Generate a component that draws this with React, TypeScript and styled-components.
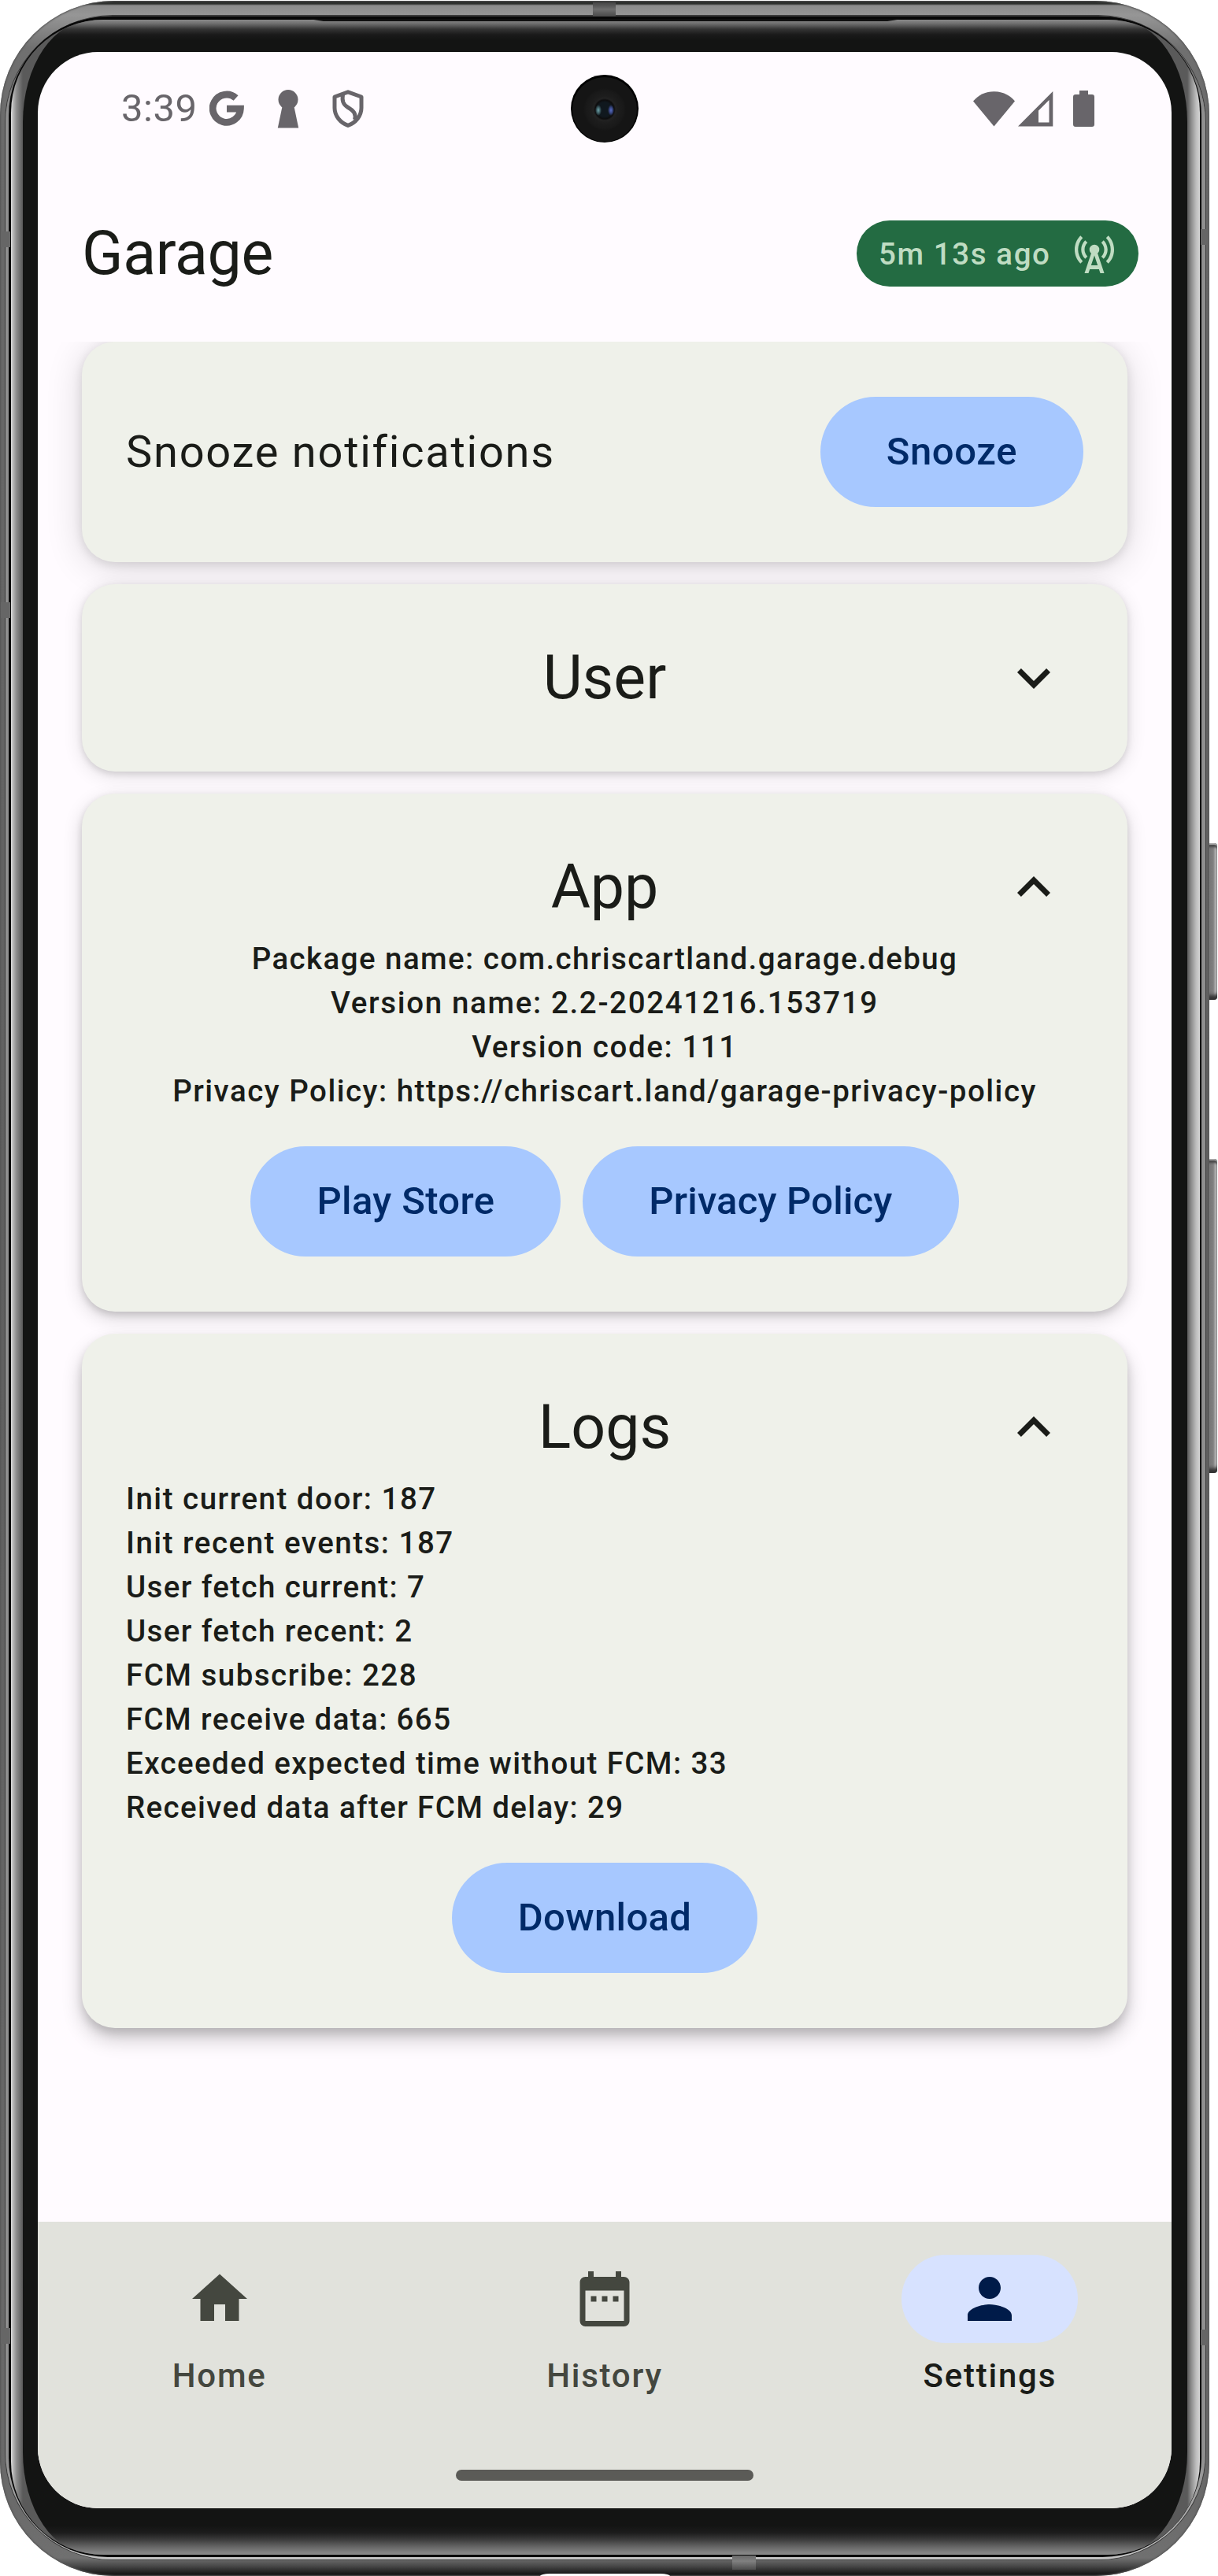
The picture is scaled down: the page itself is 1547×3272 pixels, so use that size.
import React from "react";
import styled, { createGlobalStyle } from "styled-components";
import {
  MdCellTower,
  MdDateRange,
  MdExpandLess,
  MdExpandMore,
  MdHome,
  MdPerson,
} from "react-icons/md";

const GlobalStyle = createGlobalStyle`
  *, *::before, *::after { box-sizing: border-box; }
  body { margin: 0; background: #fff; font-family: Roboto, "Noto Sans", sans-serif; }
  h1, h2, p { margin: 0; }
  h1, h2 { font-weight: 400; }
  button { font: inherit; border: 0; padding: 0; cursor: pointer; }
  svg { display: block; flex: none; }
`;

/* ---------- device ---------- */

const Device = styled.div`
  position: relative;
  width: 1547px;
  height: 3272px;
  overflow: hidden;
`;

const Metal = styled.div`
  position: relative;
  width: 1536px;
  height: 3271px;
  margin-top: 1px;
  padding: 19px 5px 21px 7px;
  border-radius: 145px;
  background: linear-gradient(
    to bottom,
    #262826 0,
    #303230 4px,
    #8c8c8c 6px,
    #969696 18px,
    #707070 60px,
    #6a6a6a 200px,
    #5f5f5f 1600px,
    #6a6a6a 3180px,
    #707070 3248px,
    #4a4a4a 3258px,
    #141414 3269px
  );
  box-shadow: inset 0 0 2px 1px #555;
`;

const Rim = styled.div`
  height: 100%;
  padding: 1px 5px 3px 4px;
  border-radius: 136px;
  background: linear-gradient(to bottom, #3c3c3c 0, #555 20px, #8f8f8f 120px, #8f8f8f 3100px, #c2c2c2 3229px);
  box-shadow: 0 0 0 1px #3a3a3a;
`;

const Gasket = styled.div`
  height: 100%;
  padding: 4px 2px 3px 3px;
  border-radius: 126px;
  background: #080808;
`;

const GlassEdge = styled.div`
  height: 100%;
  padding: 0 16px 0 15px;
  border-radius: 118px;
  overflow: hidden;
  background: linear-gradient(
    to right,
    #e0e0e0 0,
    #b4b4b4 3px,
    #8c8c8c 7px,
    #5a5a5a 15px,
    #5a5a5a 1494px,
    #8c8c8c 1499px,
    #bcbcbc 1505px,
    #d4d4d4 1510px
  );
`;

const Bezel = styled.div`
  height: 100%;
  padding: 41px 20px 57px 19px;
  border-radius: 88px / 130px;
  background: linear-gradient(
    to bottom,
    #8a8a8a 0,
    #6e6e6e 5px,
    #343434 12px,
    #1a1a1a 19px,
    #131413 26px,
    #131413 3183px,
    #1c1c1c 3192px,
    #383838 3200px,
    #666 3210px,
    #868686 3218px
  );
`;

const Screen = styled.div`
  display: flex;
  flex-direction: column;
  height: 3120px;
  border-radius: 77px;
  overflow: hidden;
  background: #fffbff;
  color: #1a1c18;
`;

const SideKey = styled.div<{ $top: number; $height: number }>`
  position: absolute;
  left: 1533px;
  top: ${(p) => p.$top}px;
  width: 13px;
  height: ${(p) => p.$height}px;
  border-radius: 3px 4px 4px 3px;
  background: linear-gradient(to right, #666 0, #999 2px, #777 4px, #808080 8px, #b5b5b5 11px, #888 13px);
  box-shadow: inset 0 -9px 4px -3px #333, inset 0 2px 1px #aaa, inset 0 9px 3px -4px #444;
`;

const AntennaBand = styled.div<{ $x: number; $y: number; $w: number; $h: number; $tone: string }>`
  position: absolute;
  left: ${(p) => p.$x}px;
  top: ${(p) => p.$y}px;
  width: ${(p) => p.$w}px;
  height: ${(p) => p.$h}px;
  background: ${(p) => p.$tone};
`;

const PortCutout = styled.div`
  position: absolute;
  left: 686px;
  top: 3269px;
  width: 165px;
  height: 6px;
  border-radius: 12px 12px 0 0 / 3px 3px 0 0;
  background: #fff;
`;

const TopLip = styled.div`
  position: absolute;
  left: 392px;
  top: 24px;
  width: 754px;
  height: 3px;
  background: #101010;
  clip-path: polygon(0 0, 100% 0, 97.5% 100%, 2.5% 100%);
`;

const Camera = styled.div`
  position: absolute;
  left: 725px;
  top: 95px;
  width: 86px;
  height: 86px;
  border-radius: 50%;
  background:
    radial-gradient(ellipse 4px 7px at 35px 45px, #6fa5ab 0, #3b5a60 55%, transparent 100%),
    radial-gradient(ellipse 4px 7px at 51px 45px, #5a6fc4 0, #35427c 55%, transparent 100%),
    radial-gradient(circle at 43px 44px, #10181e 0 9px, #0d0d0e 12px, #222 14px, #1d1d1d 17px, #191919 24px, #151515 27px);
  box-shadow: inset 0 1px 0 2px #000;
`;

/* ---------- status bar ---------- */

const StatusBar = styled.div`
  display: flex;
  align-items: center;
  flex: none;
  height: 144px;
  padding: 0 98px 0 106px;
  color: #68656a;
`;

const Clock = styled.span`
  width: 112px;
  font-size: 49px;
  line-height: 56px;
  letter-spacing: 0.5px;
`;

const Notifications = styled.div`
  display: flex;
  align-items: center;
  gap: 42px;
`;

const Indicators = styled.div`
  display: flex;
  align-items: center;
  margin-left: auto;
`;

const SignalSlot = styled.span`
  margin: 1px 25px 0 4px;
`;

const GoogleIcon = () => (
  <svg width="44" height="46" viewBox="0 0 44 46" fill="none" stroke="currentColor">
    <path d="M33.6 9.6 A17.6 17.6 0 1 0 39.4 23.2 H22" strokeWidth="8.8" />
  </svg>
);

const KeyholeIcon = () => (
  <svg width="28" height="50" viewBox="0 0 28 50" fill="currentColor">
    <circle cx="14" cy="13.5" r="12.5" />
    <path d="M7 20 H21 L27.2 49.5 H0.8 Z" />
  </svg>
);

const ShieldIcon = () => (
  <svg width="40" height="48" viewBox="0 0 40 48" fill="none" stroke="currentColor" strokeLinejoin="round">
    <path d="M20 2.8 L37 9 V23 C37 33.5 29.5 42 20 45.4 C10.500 42 3 33.500 3 23 V9 Z" strokeWidth="5" />
    <path d="M13.500 6 C12.200 14 13.500 18.500 20 22.500 C27.500 27 30.500 30.500 28.500 38" strokeWidth="5" />
  </svg>
);

const WifiIcon = () => (
  <svg width="53" height="46" viewBox="0 0 53 46" fill="currentColor">
    <path d="M26.500 45.500 L0 13.500 C7 5.500 16 1.300 26.500 1.300 S46 5.500 53 13.500 Z" />
  </svg>
);

const SignalIcon = () => (
  <svg width="45" height="45" viewBox="0 0 45 45" fill="currentColor">
    <path fillRule="evenodd" d="M0 44.500 L44.300 0 V44.500 Z M39.500 11 L26 24.500 V39.500 H39.500 Z" />
  </svg>
);

const BatteryIcon = () => (
  <svg width="27" height="46" viewBox="0 0 27 46" fill="currentColor">
    <path d="M8 0 H19 V5 H24 Q27 5 27 8 V43 Q27 46 24 46 H3 Q0 46 0 43 V8 Q0 5 3 5 H8 Z" />
  </svg>
);

/* ---------- app bar ---------- */

const AppBar = styled.header`
  display: flex;
  align-items: center;
  justify-content: space-between;
  flex: none;
  height: 224px;
  padding: 0 42px 0 56px;
`;

const Title = styled.h1`
  font-size: 77px;
  line-height: 98px;
  letter-spacing: -0.3px;
`;

const StatusPill = styled.div`
  display: flex;
  align-items: center;
  justify-content: space-between;
  width: 358px;
  height: 84px;
  padding: 0 26px 0 28px;
  border-radius: 42px;
  background: #236b42;
  color: #bfdcc2;
  font-size: 38.5px;
  font-weight: 500;
  letter-spacing: 1.6px;
  white-space: nowrap;
`;

/* ---------- cards ---------- */

const Content = styled.main`
  display: flex;
  flex-direction: column;
  flex: 1;
  gap: 28px;
  padding: 0 56px;
  overflow: hidden;
`;

const Card = styled.section<{ $shadow: string }>`
  display: flex;
  flex-direction: column;
  padding: 56px;
  border-radius: 42px;
  background: #eff1ea;
  box-shadow: ${(p) => p.$shadow};
`;

const SnoozeRow = styled.div`
  display: flex;
  align-items: center;
  justify-content: space-between;
  height: 168px;
`;

const SnoozeLabel = styled.p`
  font-size: 56px;
  line-height: 84px;
  letter-spacing: 1.75px;
`;

const CardHeader = styled.div`
  display: grid;
  grid-template-columns: 126px 1fr 126px;
  align-items: center;
  height: 126px;
`;

const CardTitle = styled.h2`
  grid-column: 2;
  font-size: 77px;
  line-height: 98px;
  text-align: center;
`;

const ExpandButton = styled.button`
  display: flex;
  align-items: center;
  justify-content: center;
  height: 126px;
  background: none;
  color: inherit;
`;

const Lines = styled.div<{ $align: "center" | "left" }>`
  display: flex;
  flex-direction: column;
  text-align: ${(p) => p.$align};
  font-size: 38.5px;
  font-weight: 500;
  line-height: 56px;
  white-space: nowrap;
`;

const Line = styled.p<{ $tracking: number }>`
  letter-spacing: ${(p) => p.$tracking}px;
`;

const Actions = styled.div`
  display: flex;
  justify-content: center;
  gap: 28px;
  padding: 42px 0 14px;
`;

const PillButton = styled.button<{ $tracking?: number }>`
  height: 140px;
  padding: 0 84px 2px;
  border-radius: 70px;
  background: #a7c8ff;
  color: #002a68;
  font-size: 49px;
  font-weight: 500;
  letter-spacing: ${(p) => p.$tracking ?? 0.35}px;
  white-space: nowrap;
`;

/* ---------- bottom navigation ---------- */

const Nav = styled.nav`
  flex: none;
  height: 364px;
  background: #e1e2dc;
`;

const NavItems = styled.div`
  display: grid;
  grid-template-columns: repeat(3, 1fr);
  gap: 28px;
  height: 280px;
  padding-top: 42px;
`;

const NavItem = styled.div<{ $active?: boolean }>`
  display: flex;
  flex-direction: column;
  align-items: center;
  gap: 14px;
  color: ${(p) => (p.$active ? "#1a1c18" : "#44473f")};
  font-size: 42px;
  font-weight: 500;
  line-height: 56px;
  letter-spacing: 1.75px;
`;

const NavIcon = styled.span<{ $active?: boolean }>`
  display: flex;
  align-items: center;
  justify-content: center;
  width: 224px;
  height: 112px;
  border-radius: 56px;
  background: ${(p) => (p.$active ? "#d7e2ff" : "transparent")};
  color: ${(p) => (p.$active ? "#001b49" : "inherit")};
`;

const GestureBar = styled.div`
  width: 378px;
  height: 14px;
  margin: 35px auto 0;
  border-radius: 7px;
  background: #5b5b57;
`;

const appInfo = [
  { text: "Package name: com.chriscartland.garage.debug", tracking: 1.42 },
  { text: "Version name: 2.2-20241216.153719", tracking: 1.65 },
  { text: "Version code: 111", tracking: 1.6 },
  { text: "Privacy Policy: https://chriscart.land/garage-privacy-policy", tracking: 1.5 },
];

const logs = [
  { text: "Init current door: 187", tracking: 1.5 },
  { text: "Init recent events: 187", tracking: 1.5 },
  { text: "User fetch current: 7", tracking: 1.38 },
  { text: "User fetch recent: 2", tracking: 1.38 },
  { text: "FCM subscribe: 228", tracking: 1.48 },
  { text: "FCM receive data: 665", tracking: 1.38 },
  { text: "Exceeded expected time without FCM: 33", tracking: 1.4 },
  { text: "Received data after FCM delay: 29", tracking: 1.37 },
];

const tabs = [
  { label: "Home", Icon: MdHome },
  { label: "History", Icon: MdDateRange },
  { label: "Settings", Icon: MdPerson, active: true },
];

function SectionHeader({ title, open }: { title: string; open?: boolean }) {
  return (
    <CardHeader>
      <CardTitle>{title}</CardTitle>
      <ExpandButton aria-label={open ? "Collapse" : "Expand"}>
        {open ? <MdExpandLess size={84} /> : <MdExpandMore size={84} />}
      </ExpandButton>
    </CardHeader>
  );
}

export default function App() {
  return (
    <Device>
      <GlobalStyle />
      <SideKey $top={1071} $height={199} />
      <SideKey $top={1472} $height={399} />
      <Metal>
        <Rim>
          <Gasket>
            <GlassEdge>
              <Bezel>
                <Screen>
                  <StatusBar>
                    <Clock>3:39</Clock>
                    <Notifications>
                      <GoogleIcon />
                      <KeyholeIcon />
                      <ShieldIcon />
                    </Notifications>
                    <Indicators>
                      <WifiIcon />
                      <SignalSlot>
                        <SignalIcon />
                      </SignalSlot>
                      <BatteryIcon />
                    </Indicators>
                  </StatusBar>
                  <AppBar>
                    <Title>Garage</Title>
                    <StatusPill>
                      5m 13s ago
                      <MdCellTower size={60} />
                    </StatusPill>
                  </AppBar>
                  <Content>
                    <Card $shadow="0 6px 48px rgba(0,0,0,.14), 0 3px 14px rgba(0,0,0,.12)">
                      <SnoozeRow>
                        <SnoozeLabel>Snooze notifications</SnoozeLabel>
                        <PillButton $tracking={0.6}>Snooze</PillButton>
                      </SnoozeRow>
                    </Card>
                    <Card $shadow="0 5px 24px rgba(0,0,0,.12), 0 3px 8px rgba(0,0,0,.12)">
                      <SectionHeader title="User" />
                    </Card>
                    <Card $shadow="0 8px 24px rgba(0,0,0,.16), 0 4px 10px rgba(0,0,0,.14)">
                      <SectionHeader title="App" open />
                      <Lines $align="center">
                        {appInfo.map(({ text, tracking }) => (
                          <Line key={text} $tracking={tracking}>
                            {text}
                          </Line>
                        ))}
                      </Lines>
                      <Actions>
                        <PillButton>Play Store</PillButton>
                        <PillButton $tracking={0.2}>Privacy Policy</PillButton>
                      </Actions>
                    </Card>
                    <Card $shadow="0 14px 26px rgba(0,0,0,.2), 0 7px 12px rgba(0,0,0,.13)">
                      <SectionHeader title="Logs" open />
                      <Lines $align="left">
                        {logs.map(({ text, tracking }) => (
                          <Line key={text} $tracking={tracking}>
                            {text}
                          </Line>
                        ))}
                      </Lines>
                      <Actions>
                        <PillButton>Download</PillButton>
                      </Actions>
                    </Card>
                  </Content>
                  <Nav>
                    <NavItems>
                      {tabs.map(({ label, Icon, active }) => (
                        <NavItem key={label} $active={active}>
                          <NavIcon $active={active}>
                            <Icon size={84} />
                          </NavIcon>
                          {label}
                        </NavItem>
                      ))}
                    </NavItems>
                    <GestureBar />
                  </Nav>
                </Screen>
              </Bezel>
            </GlassEdge>
          </Gasket>
        </Rim>
      </Metal>
      <TopLip />
      <AntennaBand $x={753} $y={3} $w={29} $h={18} $tone="linear-gradient(#444,#6e6e6e 50%,#4a4a4a)" />
      <AntennaBand $x={930} $y={3246} $w={30} $h={18} $tone="linear-gradient(#6a6a6a,#808080 40%,#4c4c4c)" />
      <AntennaBand $x={1} $y={294} $w={12} $h={20} $tone="#666" />
      <AntennaBand $x={1} $y={765} $w={12} $h={20} $tone="#666" />
      <AntennaBand $x={1} $y={2957} $w={12} $h={20} $tone="#666" />
      <AntennaBand $x={1525} $y={291} $w={10} $h={20} $tone="#666" />
      <AntennaBand $x={1525} $y={2959} $w={10} $h={20} $tone="#666" />
      <PortCutout />
      <Camera />
    </Device>
  );
}
